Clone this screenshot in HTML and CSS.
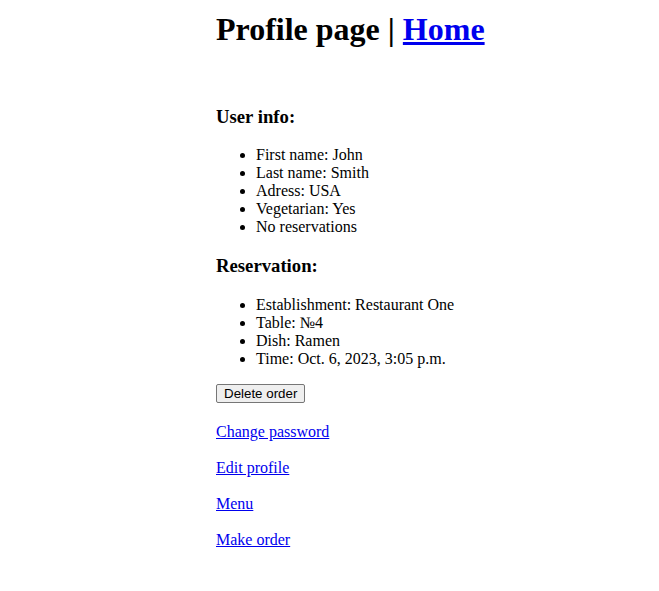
FILE: index.html
```html
<!DOCTYPE html>
<html>
<head>
<meta charset="utf-8">
<title>Profile page</title>
<link rel="stylesheet" href="styles.css">
</head>
<body>
<div class="page">
  <h1 class="title">Profile page | <a href="#">Home</a></h1>
  <div class="content">
    <h3>User info:</h3>
    <ul>
      <li>First name: John</li>
      <li>Last name: Smith</li>
      <li>Adress: USA</li>
      <li>Vegetarian: Yes</li>
      <li>No reservations</li>
    </ul>
    <h3>Reservation:</h3>
    <ul>
      <li>Establishment: Restaurant One</li>
      <li>Table: №4</li>
      <li>Dish: Ramen</li>
      <li>Time: Oct. 6, 2023, 3:05 p.m.</li>
    </ul>
    <form class="del"><button type="button" class="btn">Delete order</button></form>
    <p class="link"><a href="#">Change password</a></p>
    <p class="link"><a href="#">Edit profile</a></p>
    <p class="link"><a href="#">Menu</a></p>
    <p class="link"><a href="#">Make order</a></p>
  </div>
</div>
</body>
</html>
```
FILE: styles.css
```css
body {
  margin: 8px;
  font-family: "Liberation Serif", "Times New Roman", serif;
  font-size: 16px;
  color: #000;
  background: #fff;
}
.page {
  padding-left: 208px;
  padding-top: 3px;
}
.title {
  font-size: 32px;
  margin: 0 0 21px 0;
}
.content {
  padding-top: 18px;
}
h3 {
  font-size: 18.72px;
  margin: 18.72px 0;
}
ul {
  margin: 16px 0;
  padding-left: 40px;
}
a {
  color: #0000ee;
}
.del {
  margin: 0;
  padding-bottom: 3px;
}
.btn {
  font-family: Arial, "Liberation Sans", sans-serif;
  font-size: 13.33px;
  padding: 1px 7px;
  border: 1px solid #767676;
  border-radius: 2px;
  background: #efefef;
  color: #000;
}
.link {
  margin: 16px 0;
  line-height: 20px;
}
```
